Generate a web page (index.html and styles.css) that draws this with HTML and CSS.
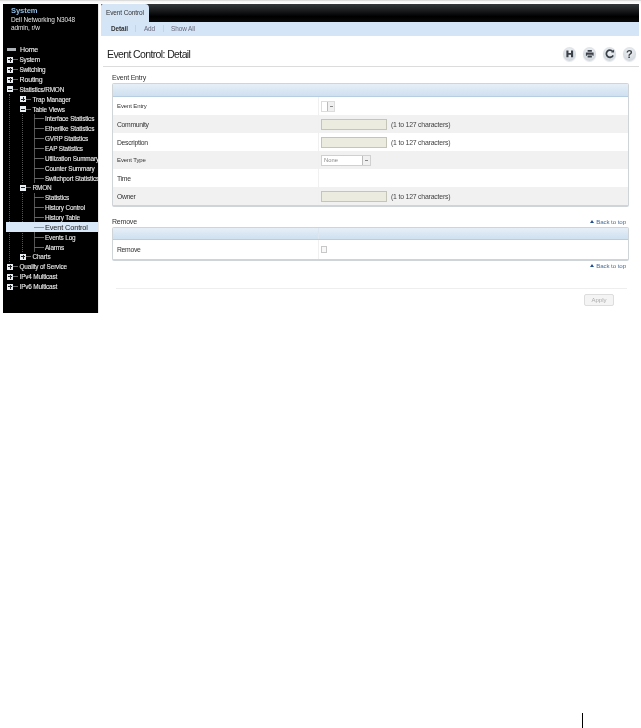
FILE: index.html
```html
<!DOCTYPE html>
<html lang="en">
<head>
<meta charset="utf-8">
<title>Event Control: Detail</title>
<link rel="stylesheet" href="styles.css">
</head>
<body>
<div class="shot">
  <aside class="side">
    <div class="brand">
      <div class="brand-name">System</div>
      <div>Dell Networking N3048</div>
      <div>admin, r/w</div>
    </div>
    <ul class="tree root">
      <li class="row"><span class="ico home"></span><span class="lab big">Home</span></li>
      <li class="row"><span class="ico plus"></span><span class="dash"></span><span class="lab">System</span></li>
      <li class="row"><span class="ico plus"></span><span class="dash"></span><span class="lab">Switching</span></li>
      <li class="row"><span class="ico plus"></span><span class="dash"></span><span class="lab big">Routing</span></li>
      <li class="row"><span class="ico minus"></span><span class="dash"></span><span class="lab">Statistics/RMON</span></li>
      <li>
        <ul class="tree l2">
          <li class="row"><span class="ico plus"></span><span class="dash"></span><span class="lab">Trap Manager</span></li>
          <li class="row"><span class="ico minus"></span><span class="dash"></span><span class="lab">Table Views</span></li>
          <li>
            <ul class="tree l3">
              <li class="row"><span class="dash long"></span><span class="lab">Interface Statistics</span></li>
              <li class="row"><span class="dash long"></span><span class="lab">Etherlike Statistics</span></li>
              <li class="row"><span class="dash long"></span><span class="lab">GVRP Statistics</span></li>
              <li class="row"><span class="dash long"></span><span class="lab">EAP Statistics</span></li>
              <li class="row"><span class="dash long"></span><span class="lab">Utilization Summary</span></li>
              <li class="row"><span class="dash long"></span><span class="lab">Counter Summary</span></li>
              <li class="row"><span class="dash long"></span><span class="lab">Switchport Statistics</span></li>
            </ul>
          </li>
          <li class="row"><span class="ico minus"></span><span class="dash"></span><span class="lab">RMON</span></li>
          <li>
            <ul class="tree l3">
              <li class="row"><span class="dash long"></span><span class="lab">Statistics</span></li>
              <li class="row"><span class="dash long"></span><span class="lab">History Control</span></li>
              <li class="row"><span class="dash long"></span><span class="lab">History Table</span></li>
              <li class="row current"><span class="dash long"></span><span class="lab cur">Event Control</span></li>
              <li class="row"><span class="dash long"></span><span class="lab">Events Log</span></li>
              <li class="row"><span class="dash long"></span><span class="lab">Alarms</span></li>
            </ul>
          </li>
          <li class="row"><span class="ico plus"></span><span class="dash"></span><span class="lab">Charts</span></li>
        </ul>
      </li>
      <li class="row"><span class="ico plus"></span><span class="dash"></span><span class="lab">Quality of Service</span></li>
      <li class="row"><span class="ico plus"></span><span class="dash"></span><span class="lab">IPv4 Multicast</span></li>
      <li class="row"><span class="ico plus"></span><span class="dash"></span><span class="lab">IPv6 Multicast</span></li>
    </ul>
  </aside>
  <main class="panel">
    <div class="tabbar"><div class="tab">Event Control</div></div>
    <nav class="subnav">
      <span class="sub active">Detail</span>
      <span class="sub">Add</span>
      <span class="sub">Show All</span>
    </nav>
    <header class="title-row">
      <h1>Event Control: Detail</h1>
      <div class="tools">
        <span class="tool"><svg viewBox="0 0 14 14"><path d="M3.500 3.500h2.200v2.600h2.600V3.500h2.200v7H8.300V8H5.700v2.500H3.500z" fill="#3b4148"/></svg></span>
        <span class="tool"><svg viewBox="0 0 14 14"><path d="M4.800 3h4.400v2H4.800zM3 5.600h8v3.400H9.800V8H4.200v1H3zM4.800 8.800h4.400v2.200H4.800z" fill="#3b4148"/></svg></span>
        <span class="tool"><svg viewBox="0 0 14 14"><path d="M10 4.600A3.700 3.700 0 1 0 10.500 8.600" fill="none" stroke="#3b4148" stroke-width="1.800"/><path d="M8.400 5.600h3.100V2.600z" fill="#3b4148"/></svg></span>
        <span class="tool help">?</span>
      </div>
    </header>
    <section class="content">
      <div class="sec-head"><span>Event Entry</span></div>
      <div class="box">
        <div class="box-head"></div>
        <div class="trow"><div class="k sm">Event Entry</div><div class="v"><span class="mini"><i></i><b></b></span></div></div>
        <div class="trow alt"><div class="k">Community</div><div class="v"><span class="inp"></span><span class="hint">(1 to 127 characters)</span></div></div>
        <div class="trow"><div class="k">Description</div><div class="v"><span class="inp"></span><span class="hint">(1 to 127 characters)</span></div></div>
        <div class="trow alt"><div class="k sm">Event Type</div><div class="v"><span class="sel"><i>None</i><b></b></span></div></div>
        <div class="trow"><div class="k">Time</div><div class="v"></div></div>
        <div class="trow alt"><div class="k">Owner</div><div class="v"><span class="inp"></span><span class="hint">(1 to 127 characters)</span></div></div>
      </div>
      <div class="sec-head second"><span>Remove</span><a class="top"><em></em>Back to top</a></div>
      <div class="box">
        <div class="box-head split"><span></span></div>
        <div class="trow last"><div class="k">Remove</div><div class="v"><span class="chk"></span></div></div>
      </div>
      <div class="after"><a class="top"><em></em>Back to top</a></div>
      <div class="actions"><span class="btn">Apply</span></div>
    </section>
  </main>
</div>
<footer class="foot"><span class="mark"></span></footer>
</body>
</html>
```
FILE: styles.css
```css
* { box-sizing: border-box; }
html, body { margin: 0; padding: 0; background: #fff; }
body { font-family: "Liberation Sans", Arial, sans-serif; color: #333; height: 728px; overflow: hidden; }
ul { list-style: none; margin: 0; padding: 0; }

.shot { display: flex; height: 313px; padding: 3px 2px 0 3px; border-top: 1px solid #dcdcdc; filter: blur(0.4px); background: linear-gradient(#f2f2f2, #fff 3px); }

.side { width: 95px; flex: none; background: #000; color: #eee; font-size: 6.400px; letter-spacing: -0.150px; overflow: hidden; }
.brand { height: 38px; padding: 3px 0 0 8px; line-height: 8.500px; font-size: 6.500px; letter-spacing: -0.120px; color: #e4e4e4; }
.brand-name { color: #8fbbe0; font-weight: bold; font-size: 7.600px; letter-spacing: -0.100px; }

.root { margin-top: 3px; padding-left: 4px; }
.row { display: flex; align-items: center; height: 9.870px; white-space: nowrap; }
.ico { width: 6px; height: 6px; flex: none; background: #e8edf2; position: relative; }
.ico::before { content: ""; position: absolute; left: 1px; right: 1px; top: 2.500px; height: 1px; background: #222; }
.plus::after { content: ""; position: absolute; top: 1px; bottom: 1px; left: 2.500px; width: 1px; background: #222; }
.home { height: 3px; width: 9px; background: #aeb4b8; margin-right: 4px; }
.home::before { display: none; }
.dash { width: 5px; height: 1px; flex: none; margin-right: 1.500px; background: #666; }
.dash.long { width: 10px; margin-right: 1px; }
.lab { color: #eee; -webkit-text-stroke: 0.1px #eee; }
.big { font-size: 7px; }
.cur { font-size: 7.400px; }

.l2 { margin-left: 2px; padding-left: 10px; border-left: 1px dotted #555; }
.l3 { margin-left: 2px; padding-left: 11px; border-left: 1px dotted #555; margin-right: -30px; background: linear-gradient(#555, #555) 11px 0 / 1px 100% no-repeat; }
.current { background: #d8e8f8; margin-left: -28px; padding-left: 28px; width: 92px; }
.current .lab { color: #222; -webkit-text-stroke: 0; }
.current .dash { background: #999; }

.panel { flex: 1; min-width: 0; padding-left: 2px; background: #fff; border-left: 1px solid #e8e8e8; }
.tabbar { height: 18px; background: linear-gradient(#33373b, #000 70%, #0a0a0a); }
.tab { width: 48px; height: 18px; padding: 5px 0 0 5px; background: #d5e5f6; border-radius: 2px 4px 0 0; font-size: 6.500px; letter-spacing: -0.120px; line-height: 8px; color: #333; white-space: nowrap; }
.subnav { height: 14px; padding: 0 0 2px 10px; background: #d4e5f7; display: flex; align-items: center; font-size: 6.400px; letter-spacing: -0.080px; color: #667; }
.sub { white-space: nowrap; }
.sub + .sub { margin-left: 7.500px; padding-left: 7.500px; border-left: 1px solid #c2d4e6; }
.sub.active { color: #333; font-weight: bold; }
.title-row { height: 31px; margin-left: 2px; padding: 6px 3px 0 4px; border-bottom: 1px solid #dcdcdc; display: flex; align-items: center; justify-content: space-between; }
h1 { margin: 0; font-size: 10.500px; letter-spacing: -0.620px; font-weight: normal; color: #222; white-space: nowrap; }
.tools { display: flex; gap: 6.500px; }
.tool { width: 13.500px; height: 13.500px; border-radius: 50%; background: radial-gradient(circle at 50% 35%, #f0f3f6, #c8cfd6); box-shadow: 0 1px 1px #e4e6e8; display: flex; align-items: center; justify-content: center; font-size: 11px; font-weight: bold; color: #3b4148; }
.tool svg { width: 13.500px; height: 13.500px; display: block; }

.content { padding: 7px 10px 0 11px; }
.sec-head { display: flex; justify-content: space-between; align-items: flex-end; height: 8px; font-size: 7px; letter-spacing: -0.200px; line-height: 8px; color: #333; white-space: nowrap; }
.sec-head.second { margin-top: 11px; }
.top { font-size: 6.200px; letter-spacing: -0.100px; color: #4a6f9c; white-space: nowrap; padding-right: 3px; }
.top em { display: inline-block; width: 0; height: 0; border: 2px solid transparent; border-bottom: 3px solid #1f4f8f; border-top: 0; margin-right: 2px; vertical-align: 1px; }
.box { margin-top: 1px; border: 1px solid #cfd4d8; border-bottom-width: 2px; border-radius: 2px; background: #fff; }
.box-head { height: 13px; background: linear-gradient(#e6eff7, #cfe0f0); border-bottom: 1px solid #b7cde2; }
.split { height: 12px; }
.split span { display: block; width: 206px; height: 100%; border-right: 1px solid #dbe6f0; }
.trow { display: flex; height: 18px; font-size: 6.800px; letter-spacing: -0.300px; align-items: stretch; }
.alt { background: #f1f1f1; }
.last { height: 19px; }
.k { width: 206px; flex: none; padding-left: 4px; display: flex; align-items: center; color: #333; border-right: 1px solid #f0f0f0; }
.k.sm { font-size: 6px; letter-spacing: -0.120px; }
.v { flex: 1; display: flex; align-items: center; padding-left: 2px; }
.inp { width: 66px; height: 11px; background: #ebebe0; border: 1px solid #c4c4b8; flex: none; }
.hint { margin-left: 4px; font-size: 6.900px; letter-spacing: -0.200px; color: #444; white-space: nowrap; }
.mini { width: 14px; height: 11px; display: flex; border: 1px solid #dcdcdc; background: #fff; }
.mini i { width: 5px; }
.mini b, .sel b { flex: 1; background: #f0f0f0; border-left: 1px solid #bbb; position: relative; }
.mini b::after, .sel b::after { content: ""; position: absolute; left: 50%; top: 4px; margin-left: -1.500px; width: 3px; height: 1px; background: #888; }
.sel { width: 50px; height: 11px; display: flex; border: 1px solid #d0d0d0; background: #fff; }
.sel i { width: 40px; padding-left: 2px; font-style: normal; font-size: 5.800px; letter-spacing: 0; line-height: 9px; color: #888; }
.chk { width: 6px; height: 7px; border: 1px solid #c8c8c8; background: #f8f8f8; }
.after { display: flex; justify-content: flex-end; height: 11px; line-height: 10px; }
.actions { margin: 16px 2px 0 4px; height: 24px; padding: 5px 13px 0 0; border-top: 1px solid #eee; display: flex; justify-content: flex-end; }
.btn { width: 30px; height: 12px; border: 1px solid #ddd; border-radius: 2px; background: #f4f4f4; font-size: 6px; line-height: 10px; text-align: center; color: #aaa; }

.foot { height: 415px; padding: 400px 0 0 582px; }
.mark { display: block; width: 1px; height: 15px; background: #000; }
```
